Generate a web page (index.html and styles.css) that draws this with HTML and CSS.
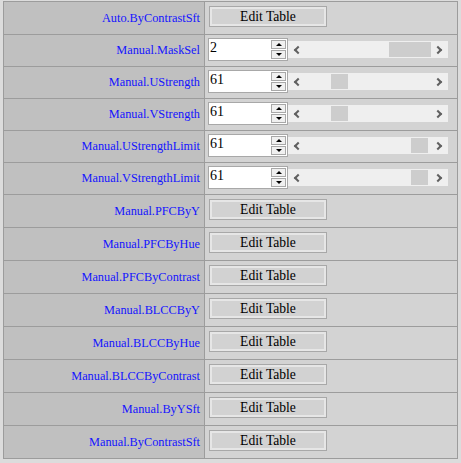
FILE: index.html
```html
<!DOCTYPE html>
<html>
<head>
<meta charset="utf-8">
<link rel="stylesheet" href="styles.css">
</head>
<body>
<div class="grid">
  <div class="label tall">Auto.ByContrastSft</div>
  <div class="cell tall"><button class="btn">Edit Table</button></div>

  <div class="label">Manual.MaskSel</div>
  <div class="cell">
    <div class="num"><span class="val">2</span><span class="spin"><span class="up"></span><span class="down"></span></span></div>
    <div class="scroll"><span class="arr l"></span><span class="track"><span class="thumb" style="left:101px;width:42px"></span></span><span class="arr r"></span></div>
  </div>

  <div class="label">Manual.UStrength</div>
  <div class="cell">
    <div class="num"><span class="val">61</span><span class="spin"><span class="up"></span><span class="down"></span></span></div>
    <div class="scroll"><span class="arr l"></span><span class="track"><span class="thumb" style="left:43px;width:17px"></span></span><span class="arr r"></span></div>
  </div>

  <div class="label">Manual.VStrength</div>
  <div class="cell">
    <div class="num"><span class="val">61</span><span class="spin"><span class="up"></span><span class="down"></span></span></div>
    <div class="scroll"><span class="arr l"></span><span class="track"><span class="thumb" style="left:43px;width:17px"></span></span><span class="arr r"></span></div>
  </div>

  <div class="label">Manual.UStrengthLimit</div>
  <div class="cell">
    <div class="num"><span class="val">61</span><span class="spin"><span class="up"></span><span class="down"></span></span></div>
    <div class="scroll"><span class="arr l"></span><span class="track"><span class="thumb" style="left:123px;width:17px"></span></span><span class="arr r"></span></div>
  </div>

  <div class="label">Manual.VStrengthLimit</div>
  <div class="cell">
    <div class="num"><span class="val">61</span><span class="spin"><span class="up"></span><span class="down"></span></span></div>
    <div class="scroll"><span class="arr l"></span><span class="track"><span class="thumb" style="left:123px;width:17px"></span></span><span class="arr r"></span></div>
  </div>

  <div class="label tall">Manual.PFCByY</div>
  <div class="cell tall"><button class="btn">Edit Table</button></div>
  <div class="label tall">Manual.PFCByHue</div>
  <div class="cell tall"><button class="btn">Edit Table</button></div>
  <div class="label tall">Manual.PFCByContrast</div>
  <div class="cell tall"><button class="btn">Edit Table</button></div>
  <div class="label tall">Manual.BLCCByY</div>
  <div class="cell tall"><button class="btn">Edit Table</button></div>
  <div class="label tall">Manual.BLCCByHue</div>
  <div class="cell tall"><button class="btn">Edit Table</button></div>
  <div class="label tall">Manual.BLCCByContrast</div>
  <div class="cell tall"><button class="btn">Edit Table</button></div>
  <div class="label tall">Manual.ByYSft</div>
  <div class="cell tall"><button class="btn">Edit Table</button></div>
  <div class="label tall">Manual.ByContrastSft</div>
  <div class="cell tall"><button class="btn">Edit Table</button></div>
</div>
</body>
</html>
```

FILE: styles.css
```css
html, body {
  background: #dcdcdc;
}
body {
  margin: 1px 0 0 3px;
  font-family: "Liberation Serif", "Times New Roman", serif;
}
.grid {
  display: grid;
  grid-template-columns: 200px 252px;
  gap: 1px;
  padding: 1px;
  background: #9c9c9c;
  width: 453px;
}
.label {
  background: #c0c0c0;
  color: #1414ff;
  font-size: 12.3px;
  text-align: right;
  padding-right: 4px;
  height: 31px;
  display: flex;
  align-items: center;
  justify-content: flex-end;
  box-sizing: border-box;
}
.cell {
  background: #d3d3d3;
  height: 31px;
  display: flex;
  align-items: flex-start;
  padding: 3px 0 0 3px;
  box-sizing: border-box;
}
.label.tall, .cell.tall {
  height: 32px;
}
.cell.tall {
  padding: 4px 0 0 4px;
}
.btn {
  width: 118px;
  height: 21px;
  margin: 0;
  padding: 0;
  border: 1px solid #a8a8a8;
  box-shadow: inset 0 0 0 2px #e6e6e6;
  background: #d2d2d2;
  font-family: "Liberation Serif", "Times New Roman", serif;
  font-size: 13.6px;
  color: #000;
  line-height: 17px;
}
.num {
  width: 80px;
  height: 23px;
  box-sizing: border-box;
  border: 1px solid #a8a8a8;
  background: #fff;
  display: flex;
  align-items: flex-start;
  justify-content: space-between;
}
.val {
  font-size: 14px;
  line-height: 18px;
  padding-left: 1px;
  color: #000;
}
.spin {
  display: flex;
  flex-direction: column;
  width: 15px;
  margin: 1px 1px 0 0;
}
.up, .down {
  height: 9px;
  box-sizing: border-box;
  border: 1px solid #a8a8a8;
  background: #f0f0f0;
  display: flex;
  align-items: center;
  justify-content: center;
}
.down {
  margin-top: 1px;
}
.up::after {
  content: "";
  border-left: 3px solid transparent;
  border-right: 3px solid transparent;
  border-bottom: 3px solid #000;
}
.down::after {
  content: "";
  border-left: 3px solid transparent;
  border-right: 3px solid transparent;
  border-top: 3px solid #000;
}
.scroll {
  width: 160px;
  height: 17px;
  margin-top: 3px;
  background: #efefef;
  display: flex;
  align-items: center;
}
.track {
  position: relative;
  flex: 1;
  height: 15px;
}
.thumb {
  position: absolute;
  top: 0;
  height: 15px;
  background: #cdcdcd;
  margin-left: -17px;
}
.arr {
  width: 17px;
  height: 15px;
  display: flex;
  align-items: center;
  justify-content: center;
}
.arr::after {
  content: "";
  width: 4px;
  height: 4px;
  border-left: 2px solid #606060;
  border-bottom: 2px solid #606060;
}
.arr.l::after {
  transform: rotate(45deg);
  margin-left: 3px;
}
.arr.r::after {
  transform: rotate(-135deg);
  margin-right: 3px;
}
```
